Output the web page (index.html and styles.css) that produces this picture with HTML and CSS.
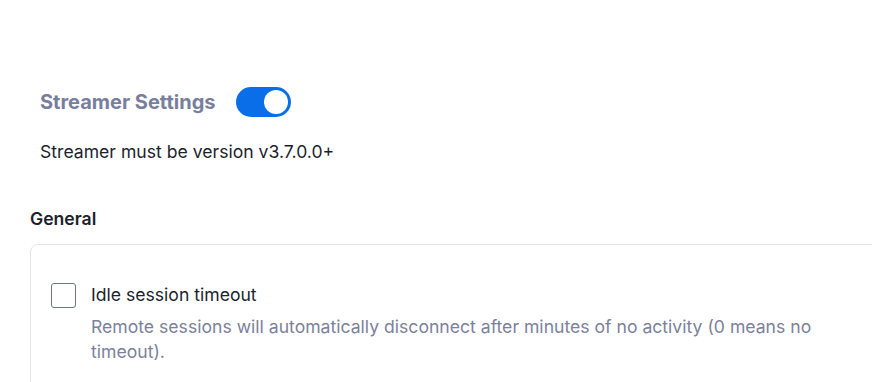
FILE: index.html
```html
<!DOCTYPE html>
<html>
<head>
<meta charset="utf-8">
<link rel="stylesheet" href="styles.css">
</head>
<body>
<div class="page">
  <div class="header">
    <h2 class="title">Streamer Settings</h2>
    <span class="toggle"><span class="knob"></span></span>
  </div>
  <p class="note">Streamer must be version v3.7.0.0+</p>
  <h3 class="section-title">General</h3>
  <div class="card">
    <div class="option">
      <span class="checkbox"></span>
      <span class="label">Idle session timeout</span>
    </div>
    <p class="desc">Remote sessions will automatically disconnect after minutes of no activity (0 means no timeout).</p>
  </div>
</div>
</body>
</html>
```

FILE: styles.css
```css
html, body {
  margin: 0;
  padding: 0;
  background: #ffffff;
  overflow: hidden;
}
body {
  font-family: Inter, "Noto Sans", sans-serif;
  color: #1c1f2e;
  width: 872px;
  height: 382px;
}
.page {
  padding: 87px 0 0 30px;
}
.header {
  display: flex;
  align-items: center;
  gap: 20px;
  padding-left: 10px;
  height: 30px;
}
.title {
  margin: 0;
  font-size: 20px;
  font-weight: 700;
  color: #787e9c;
  line-height: 30px;
}
.toggle {
  display: block;
  position: relative;
  width: 55px;
  height: 30px;
  border-radius: 15px;
  background: #0a6ee8;
}
.knob {
  position: absolute;
  top: 3px;
  right: 3px;
  width: 24px;
  height: 24px;
  border-radius: 50%;
  background: #ffffff;
}
.note {
  margin: 23px 0 0 10px;
  font-size: 17.6px;
  line-height: 24px;
}
.section-title {
  margin: 43px 0 0 0;
  font-size: 17.6px;
  font-weight: 600;
  line-height: 24px;
}
.card {
  margin-top: 13px;
  width: 900px;
  height: 150px;
  border: 1px solid #e3e5ea;
  border-radius: 8px;
  padding: 38px 0 0 20px;
  box-sizing: border-box;
}
.option {
  display: flex;
  align-items: center;
  gap: 15px;
  height: 24px;
}
.checkbox {
  display: block;
  width: 23px;
  height: 23px;
  border: 1px solid #70758a;
  border-radius: 3px;
  flex: none;
}
.label {
  font-size: 17.6px;
  line-height: 24px;
}
.desc {
  margin: 7px 0 0 40px;
  width: 760px;
  font-size: 17.6px;
  line-height: 25px;
  color: #7c819b;
}
```
